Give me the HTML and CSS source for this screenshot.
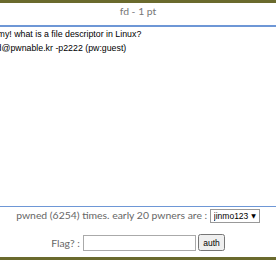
FILE: index.html
```html
<!DOCTYPE html>
<html lang="en">
  <head>
    <meta charset="UTF-8" />
    <meta name="viewport" content="width=device-width, initial-scale=1.0" />
    <title>fd - 1 pt</title>
    <link rel="stylesheet" href="styles.css">
  </head>
  <body>
    <div id="modal">
      <div id="head">fd - 1 pt</div>

      <div id="desc">
        <p>Mommy! what is a file descriptor in Linux?</p>
        <p>ssh fd@pwnable.kr -p2222 (pw:guest)</p>
      </div>

      <div id="foot">
        <p id="pwned">
          pwned (6254) times. early 20 pwners are :
          <span class="pick">
            <select>
              <option>jinmo123</option>
            </select>
          </span>
        </p>

        <form>
          <label for="flag">Flag? :</label>
          <input id="flag" type="text" />
          <input type="submit" value="auth" />
        </form>
      </div>
    </div>
  </body>
</html>
```

FILE: styles.css
```css
* {
  box-sizing: border-box;
  margin: 0;
  padding: 0;
}

body {
  background-color: white;
  font-family: Lato, sans-serif;
  overflow: hidden;
}

#modal {
  display: flex;
  flex-direction: column;
  height: 260px;
  border-top: 3px solid #6a6a2d;
  border-bottom: 3px solid #6a6a2d;
}

#head {
  height: 24px;
  line-height: 16px;
  text-align: center;
  color: #777;
  font-size: 10.4px;
  border-bottom: 2px solid #6e97d6;
}

#desc {
  flex: 1;
  margin-left: -22px;
  font-family: "Liberation Sans", Arial, sans-serif;
  font-size: 8.8px;
  color: #000;
  white-space: nowrap;
}

#desc p {
  line-height: 14px;
}

#foot {
  border-top: 1px solid #6e97d6;
  text-align: center;
  color: #666;
  font-size: 10.4px;
}

#pwned {
  padding-top: 2px;
  height: 25px;
}

.pick {
  position: relative;
  display: inline-block;
  vertical-align: middle;
}

.pick::after {
  content: "▼";
  position: absolute;
  right: 4px;
  top: 3px;
  font-family: "DejaVu Sans", sans-serif;
  font-size: 6px;
  color: #000;
  pointer-events: none;
}

select {
  appearance: none;
  display: block;
  width: 50px;
  height: 14px;
  padding: 0 0 0 3px;
  border: 1px solid #999;
  border-radius: 0;
  background-color: white;
  font-family: "Liberation Sans", Arial, sans-serif;
  font-size: 8.5px;
  color: #000;
}

form {
  padding-top: 2px;
  height: 25px;
}

label {
  vertical-align: middle;
}

#flag {
  width: 113px;
  height: 16px;
  border: 1px solid #aaa;
  vertical-align: middle;
}

input[type="submit"] {
  font-family: "Liberation Sans", Arial, sans-serif;
  font-size: 8.5px;
  height: 17px;
  padding: 0 3px;
  vertical-align: middle;
}
```
